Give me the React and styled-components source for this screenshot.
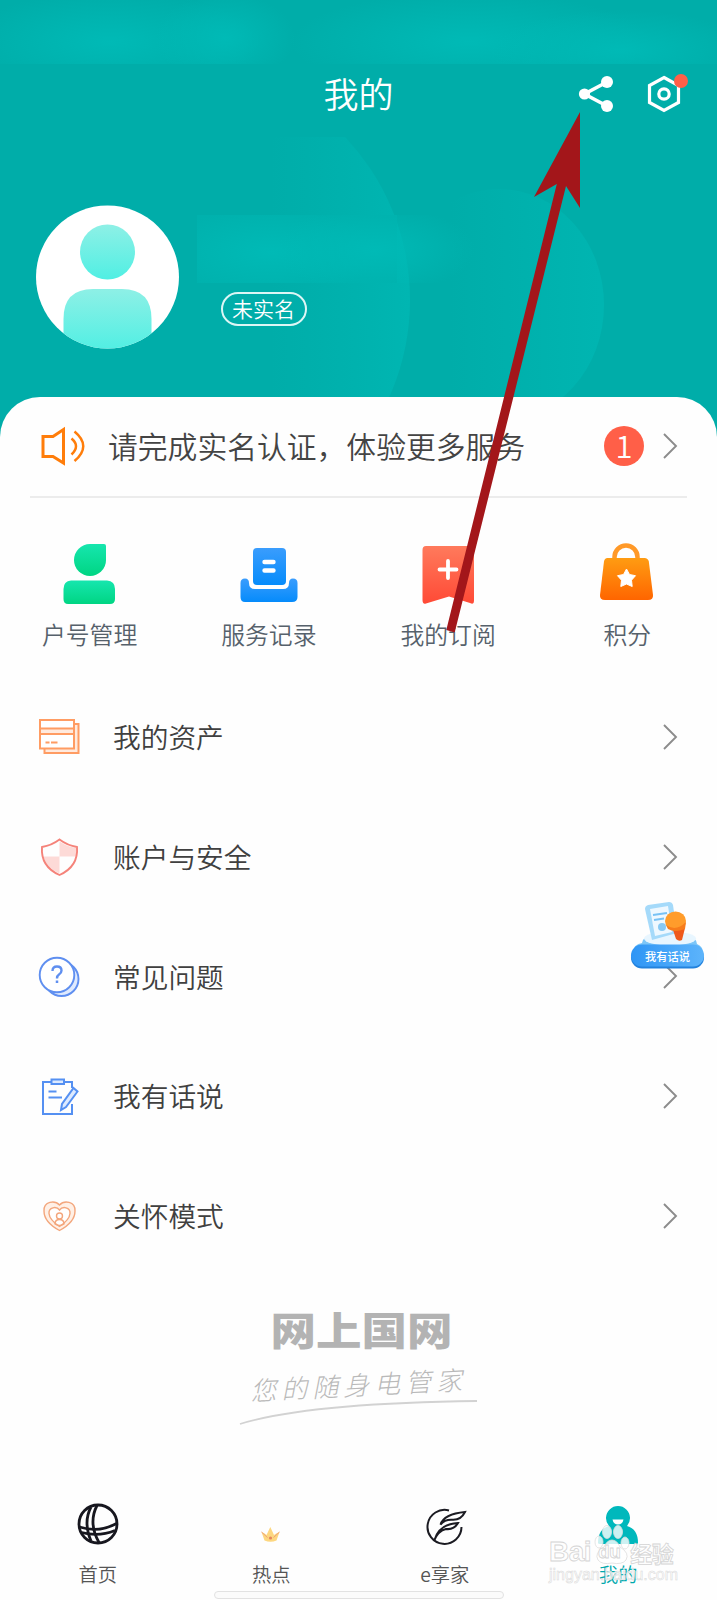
import React from 'react'
import styled, { createGlobalStyle } from 'styled-components'

const GlobalStyle = createGlobalStyle`
* {
  box-sizing: border-box;
}
body {
  margin: 0;
  background: #ffffff;
  font-family: "Noto Sans CJK SC", "Noto Sans", sans-serif;
  font-weight: 350;
}
svg {
  display: block;
  flex-shrink: 0;
  overflow: visible;
}
`;

const Page = styled.div`
position: relative;
display: flex;
flex-direction: column;
width: 717px;
height: 1600px;
overflow: hidden;
background: #fefefe;
`;

const Header = styled.header`
position: relative;
height: 437px;
flex-shrink: 0;
background: #00ada9;
color: #ffffff;
`;

const HeaderArt = styled.svg`
position: absolute;
top: 0;
left: 0;
`;

const TitleBar = styled.div`
display: grid;
grid-template-columns: 1fr auto 1fr;
align-items: center;
height: 62px;
margin-top: 64px;
`;

const HeaderInner = styled.div`
position: relative;
display: flow-root;
`;

const Title = styled.h1`
grid-column: 2;
margin: -4px 0 0;
font-size: 35px;
font-weight: 350;
line-height: 58px;
`;

const HeaderActions = styled.div`
display: flex;
justify-content: flex-end;
align-items: center;
gap: 34px;
padding-right: 36px;
margin-top: -3px;
`;

const SettingButton = styled.div`
position: relative;
`;

const Dot = styled.span`
position: absolute;
top: -1px;
right: -6.5px;
width: 14px;
height: 14px;
border-radius: 50%;
background: #ff5f48;
`;

const Profile = styled.div`
display: flex;
align-items: flex-start;
padding: 79px 0 0 35.5px;
`;

const RealNameTag = styled.span`
width: 86px;
height: 34px;
margin: 87px 0 0 42px;
border: 2px solid #dcf6f5;
border-radius: 17px;
font-size: 21px;
line-height: 28px;
text-align: center;
white-space: nowrap;
`;

const Panel = styled.main`
position: relative;
display: flex;
flex-direction: column;
flex: 1;
margin-top: -40px;
border-radius: 40px 40px 0 0;
background: #fefefe;
`;

const Notice = styled.div`
display: flex;
align-items: center;
height: 101px;
margin: 0 30px;
padding: 0 10px 2px;
border-bottom: 2px solid #ececec;
`;

const NoticeText = styled.span`
flex: 1;
margin-left: 22px;
padding-bottom: 2px;
color: #444444;
font-size: 29.8px;
line-height: 40px;
white-space: nowrap;
`;

const Count = styled.span`
width: 40px;
height: 40px;
margin-right: 19px;
border-radius: 50%;
background: #ff5f48;
color: #ffffff;
font-size: 31px;
line-height: 38px;
text-align: center;
`;

const QuickRow = styled.div`
display: grid;
grid-template-columns: repeat(4, 1fr);
height: 179px;
padding-top: 42px;
`;

const QuickItem = styled.div`
display: flex;
flex-direction: column;
align-items: center;
`;

const QuickLabel = styled.span`
margin-top: 12px;
color: #56616b;
font-size: 23.8px;
line-height: 36px;
`;

const MenuList = styled.div`
display: flex;
flex-direction: column;
`;

const MenuItem = styled.div`
display: flex;
align-items: center;
height: 119.7px;
padding: 0 40px 0 38px;
`;

const MenuLabel = styled.span`
flex: 1;
margin-left: 32px;
padding-bottom: 1px;
color: #404040;
font-size: 27.7px;
line-height: 40px;
`;

const Brand = styled.div`
display: flex;
flex-direction: column;
align-items: center;
padding-top: 29px;
`;

const BrandName = styled.span`
margin-left: 6px;
color: #b3b3b3;
font-size: 45.5px;
font-weight: 900;
line-height: 48px;
transform: scaleY(0.84);
`;

const Slogan = styled.span`
margin-top: 15px;
color: #b9b9b9;
font-size: 26px;
font-style: italic;
font-weight: 300;
letter-spacing: 5px;
line-height: 34px;
transform: rotate(-3deg);
`;

const TabBar = styled.nav`
display: grid;
grid-template-columns: repeat(4, 173.5px);
height: 88px;
padding-left: 11px;
margin-top: auto;
`;

const Tab = styled.div`
display: flex;
flex-direction: column;
align-items: center;
color: ${({ $active }) => ($active ? '#00a9ad' : '#555555')};
font-size: 19.3px;
line-height: 28px;
`;

const TabIcon = styled.div`
height: 42px;
margin-bottom: 15px;
`;

const HomeIndicator = styled.div`
width: 290px;
height: 8px;
margin: 0 auto 1px;
border: 1.5px solid #e2e2e2;
border-radius: 4px;
background: #fbfbfb;
`;

const Feedback = styled.div`
position: absolute;
top: 902px;
left: 630px;
width: 75px;
`;

const FeedbackText = styled.span`
position: absolute;
top: 44.5px;
left: 0;
width: 75px;
color: #ffffff;
font-size: 11.3px;
font-weight: 500;
line-height: 18px;
text-align: center;
`;

const Arrow = styled.svg`
position: absolute;
top: 112px;
left: 440px;
`;

const Watermark = styled.div`
position: absolute;
top: 1534px;
left: 549px;
width: 132px;
font-family: "Liberation Sans", "Noto Sans CJK SC", sans-serif;
font-weight: 700;
color: rgba(255, 255, 255, 0.85);
-webkit-text-stroke: 0.8px #d4d4d4;
`;

const WatermarkLogo = styled.div`
display: flex;
align-items: center;
height: 36px;
font-size: 28px;
letter-spacing: -0.5px;
`;

const WatermarkPaw = styled.svg`
position: absolute;
top: -11px;
left: 45px;
`;

const WatermarkDu = styled.span`
position: relative;
margin-left: 7px;
font-size: 19px;
`;

const WatermarkCn = styled.span`
margin-left: 10px;
font-size: 22px;
`;

const WatermarkUrl = styled.div`
margin-top: -4px;
font-size: 16px;
font-weight: 400;
line-height: 18px;
-webkit-text-stroke: 0.5px #d8d8d8;
`;

const Chevron = () => (
  <svg width="14" height="26" viewBox="0 0 14 26" fill="none" stroke="#8c8c8c" strokeWidth="1.9">
    <path d="M1 1 13 13 1 25" />
  </svg>
)

const ShareIcon = () => (
  <svg width="35" height="38" viewBox="0 0 35 38" fill="#ffffff">
    <path d="M29 7 6.500 19 29 31" fill="none" stroke="#ffffff" strokeWidth="3.6" />
    <circle cx="29" cy="7" r="6" />
    <circle cx="6.500" cy="19" r="5.600" />
    <circle cx="29" cy="31" r="6" />
  </svg>
)

const SettingIcon = () => (
  <svg width="34" height="38" viewBox="0 0 34 38" fill="none" stroke="#ffffff" strokeWidth="3.2">
    <path d="M17 2.500 31.500 10.500V27.500L17 35.500 2.500 27.500V10.500Z" />
    <circle cx="17" cy="19" r="5.200" />
  </svg>
)

const Avatar = () => (
  <svg width="143" height="144" viewBox="0 0 143 144">
    <defs>
      <linearGradient id="avatarFill" x1="0" y1="0" x2="0" y2="1">
        <stop offset="0" stopColor="#8ef0e6" />
        <stop offset="1" stopColor="#50efe3" />
      </linearGradient>
      <clipPath id="avatarClip"><circle cx="71.500" cy="72" r="71.500" /></clipPath>
    </defs>
    <circle cx="71.500" cy="72" r="71.500" fill="#ffffff" />
    <g clipPath="url(#avatarClip)" fill="url(#avatarFill)">
      <circle cx="71.500" cy="47" r="27.500" />
      <path d="M27.500 146V114Q27.500 84 57 84H86Q115.500 84 115.500 114V146Z" />
    </g>
  </svg>
)

const SpeakerIcon = () => (
  <svg width="46" height="38" viewBox="0 0 46 38" fill="none" stroke="#ff7d0a" strokeWidth="3">
    <path d="M3 9.500H13L23.500 2.500V36L13 29.500H3Z" />
    <path d="M31.500 11.500Q40.500 19 31.500 27.500" strokeWidth="2.500" />
    <path d="M34.500 4.500Q52 19 34.500 34" strokeWidth="2.500" />
  </svg>
)

const AccountIcon = () => (
  <svg width="60" height="64" viewBox="1 0 60 64">
    <defs>
      <linearGradient id="greenFill" x1="0" y1="0" x2="0" y2="1">
        <stop offset="0" stopColor="#16e6ae" />
        <stop offset="1" stopColor="#00d583" />
      </linearGradient>
    </defs>
    <path d="M31 4H45Q47 4 47 6V20A16 16 0 1 1 31 4Z" fill="url(#greenFill)" />
    <path d="M12 40.500H48Q56 41 56 49V59Q56 64 51 64H9Q4.500 64 4.500 59V49Q4.500 41 12 40.500Z" fill="url(#greenFill)" />
  </svg>
)

const RecordIcon = () => (
  <svg width="60" height="64" viewBox="0 0 60 64">
    <defs>
      <linearGradient id="blueFill" x1="0" y1="0" x2="0" y2="1">
        <stop offset="0" stopColor="#3a9dfd" />
        <stop offset="1" stopColor="#058bfb" />
      </linearGradient>
    </defs>
    <rect x="14" y="8" width="33" height="37" rx="4" fill="url(#blueFill)" />
    <path d="M6 38.500Q10 38.500 10 43 10 49 16 49H44Q50 49 50 43 50 38.500 54 38.500 58.500 38.500 58.500 43V57Q58.500 62 53 62H6Q1.500 62 1.500 57V43Q1.500 38.500 6 38.500Z" fill="url(#blueFill)" />
    <path d="M25.500 22H34.500M25.500 30.500H34.500" stroke="#ffffff" strokeWidth="4.400" strokeLinecap="round" />
  </svg>
)

const SubscribeIcon = () => (
  <svg width="60" height="64" viewBox="0 0 60 64">
    <defs>
      <linearGradient id="redFill" x1="0" y1="0" x2="0" y2="1">
        <stop offset="0" stopColor="#ff7a5c" />
        <stop offset="1" stopColor="#ff4a36" />
      </linearGradient>
    </defs>
    <path d="M8 6H52Q56 6 56 10V61Q56 65 52 63L31 56.500 8 63.500Q4.500 64.500 4.500 60V10Q4.500 6 8 6Z" fill="url(#redFill)" />
    <path d="M30 21V38M21.500 29.500H38.500" stroke="#ffffff" strokeWidth="3.800" strokeLinecap="round" />
  </svg>
)

const PointsIcon = () => (
  <svg width="60" height="64" viewBox="0.500 -1 60 64">
    <defs>
      <linearGradient id="orangeFill" x1="0" y1="0" x2="0" y2="1">
        <stop offset="0" stopColor="#ff9c12" />
        <stop offset="1" stopColor="#ff6500" />
      </linearGradient>
    </defs>
    <path d="M18 19V16A11.500 11.500 0 0 1 41 16V19" fill="none" stroke="#ff9928" strokeWidth="4.500" />
    <path d="M11 17H48Q51.500 17 52.300 20.500L56.500 54Q57 59 51.500 59H8.500Q3 59 3.500 54L7.500 20.500Q8 17 11 17Z" fill="url(#orangeFill)" />
    <path d="M30 28 33 33.500 39 34.700 35 39.200 35.700 45.500 30 43 24.300 45.500 25 39.200 21 34.700 27 33.500Z" fill="#ffffff" stroke="#ffffff" strokeWidth="1" strokeLinejoin="round" />
  </svg>
)

const AssetIcon = () => (
  <svg width="43" height="44" viewBox="0.500 0 43 44" fill="none" stroke="#ff9c63" strokeWidth="2">
    <path d="M37 9H41V38H7V34" fill="#ffeade" />
    <rect x="2.500" y="5" width="34" height="28.500" fill="#ffffff" />
    <path d="M2.500 13.500H36.500V19H2.500Z" fill="#ffeade" />
    <path d="M8 27.500H12M13.500 27.500H20" />
  </svg>
)

const ShieldIcon = () => (
  <svg width="43" height="44" viewBox="0 -0.500 43 44">
    <path d="M21.500 6Q29 11 38 12.500V21H21.500ZM21.500 21V38Q8 32 5.500 21Z" fill="#fddad7" />
    <path d="M21.500 4Q29.500 10 39 11.500 40.500 31 21.500 39.500 2.500 31 4 11.500 13.500 10 21.500 4Z" fill="none" stroke="#f5837a" strokeWidth="1.900" />
  </svg>
)

const QuestionIcon = () => (
  <svg width="43" height="44" viewBox="0.500 -1.500 43 44" fill="none" stroke="#5f8ff0" strokeWidth="1.900">
    <circle cx="24" cy="23.500" r="17" fill="#dfeafe" />
    <circle cx="19.500" cy="19.500" r="17.300" fill="#ffffff" />
    <path d="M15 15.500Q15 11 19.500 11 24 11 24 15 24 17.500 21.500 19 19.500 20.200 19.500 23" strokeWidth="2.400" />
    <path d="M19.500 25V27.500" strokeWidth="2.500" />
  </svg>
)

const NoteIcon = () => (
  <svg width="43" height="44" viewBox="0 -2 43 44" fill="none" stroke="#5590f2" strokeWidth="2">
    <path d="M13 6H5V38H34V28M34 12V6H26" />
    <rect x="13.500" y="3.500" width="12.500" height="4.500" fill="#ddeaff" />
    <path d="M10.500 15.500H18.500M10.500 21.500H24" />
    <path d="M35.500 12 39.500 15.500 28 31 23 34 24 28Z" fill="#ddeaff" />
  </svg>
)

const CareIcon = () => (
  <svg width="43" height="44" viewBox="0 -3 43 44" fill="none" stroke="#f3a67c" strokeWidth="1.400">
    <path d="M21.500 8C17 3 5.500 4 6 14 6 23 15 30 21.500 33.500 28 30 37 23 37 14 37.500 4 26 3 21.500 8Z" fill="#fff0e6" />
    <path d="M21.500 13C18.500 9 10.500 10 11 16.500 11.500 22.500 17 26.500 21.500 29.500 26 26.500 31.500 22.500 32 16.500 32.500 10 24.500 9 21.500 13Z" fill="#ffffff" />
    <circle cx="21.500" cy="19" r="3" />
    <path d="M17 27Q17 22.500 21.500 22.500 26 22.500 26 27 21.500 30 17 27Z" />
  </svg>
)

const HomeIcon = () => (
  <svg width="42" height="42" viewBox="0 0 42 42" fill="none" stroke="#17171f" strokeWidth="2.800">
    <circle cx="21" cy="21" r="19" />
    <path d="M14 4Q6 19 14 38M20 2.500Q11 20 22 39.500" />
    <path d="M2.500 24Q22 30 39.500 20.500M4.500 29.500Q22 34 38 27.500" />
  </svg>
)

const HotIcon = () => (
  <svg width="42" height="42" viewBox="0.500 1 42 42">
    <path d="M12 30Q15 31 17 33L20.800 25 24.500 33Q27 31 30 30L27 38.500Q21 41 15 38.500Z" fill="#fdd780" />
    <path d="M12 30 18 35.500M30 30 24 35.500" stroke="#eda17a" strokeWidth="1" />
    <circle cx="21" cy="36" r="1.600" fill="#e5865e" />
  </svg>
)

const LeafIcon = () => (
  <svg width="42" height="42" viewBox="1 0 42 42" fill="none" stroke="#1b1b22" strokeWidth="2">
    <path d="M26 7.500A17 17 0 1 0 38.500 24" />
    <path d="M17.500 21.500Q21 11 42 9 38 17 30 16.800 22 16 17.500 21.500Z" />
    <path d="M11.500 37Q16 21 35 20 31 27 23 26 15 28 11.500 37Z" />
  </svg>
)

const MineIcon = () => (
  <svg width="42" height="42" viewBox="0 0 42 42" fill="#00b8bc">
    <path d="M12 23A12 12 0 1 1 30 23Q41 26 41 40Q41 41 39 41H3Q1 41 1 40 1 26 12 23Z" />
    <path d="M15.500 16.500H26.500Q25.500 21.500 21 21.500 16.500 21.500 15.500 16.500Z" fill="#ffffff" />
  </svg>
)

const FeedbackArt = () => (
  <svg width="75" height="68" viewBox="0 0 75 68">
    <defs>
      <linearGradient id="pillFill" x1="0" y1="0" x2="1" y2="0">
        <stop offset="0" stopColor="#2e95f5" />
        <stop offset="1" stopColor="#5db4fb" />
      </linearGradient>
    </defs>
    <path d="M3 50Q4 42 12 41 14 33 24 33 42 27 58 33 66 35 67 42 73 44 73 52Z" fill="#7cc6f8" />
    <ellipse cx="40" cy="36.500" rx="26" ry="7" fill="#e8f6ff" />
    <path d="M18 3 39 0Q42 0 43 3L47 31 22 38 15 7Q15 4 18 3Z" fill="#a5dafa" />
    <path d="M20 7 38 4 42 30 25 34Z" fill="#eef8ff" />
    <path d="M23 13 37 11M24 18 34 16.500" stroke="#78c2f5" strokeWidth="1.800" />
    <circle cx="32" cy="25" r="4" fill="#88c9f4" />
    <path d="M43 28 55 26 52 38Q49 40 46 37Z" fill="#ee5a1c" />
    <ellipse cx="45.500" cy="19" rx="10.500" ry="9.500" fill="#ff9c2b" />
    <path d="M36 23Q46 30 56 20L55 27Q45 31 38 27Z" fill="#f77c1b" />
    <rect x="1" y="44.500" width="73" height="22" rx="11" fill="#2282dd" />
    <rect x="1" y="42.500" width="73" height="22" rx="11" fill="url(#pillFill)" />
  </svg>
)

const quickData = [
  { label: '户号管理', icon: <AccountIcon /> },
  { label: '服务记录', icon: <RecordIcon /> },
  { label: '我的订阅', icon: <SubscribeIcon /> },
  { label: '积分', icon: <PointsIcon /> },
]

const menuData = [
  { label: '我的资产', icon: <AssetIcon /> },
  { label: '账户与安全', icon: <ShieldIcon /> },
  { label: '常见问题', icon: <QuestionIcon /> },
  { label: '我有话说', icon: <NoteIcon /> },
  { label: '关怀模式', icon: <CareIcon /> },
]

const tabData = [
  { label: '首页', icon: <HomeIcon /> },
  { label: '热点', icon: <HotIcon /> },
  { label: 'e享家', icon: <LeafIcon /> },
  { label: '我的', icon: <MineIcon />, active: true },
]

const App = () => {
  return (
    <>
      <GlobalStyle />
      <Page>
        <Header>
          <HeaderArt width="717" height="437" viewBox="0 0 717 437">
            <defs>
              <linearGradient id="discLeft" gradientUnits="userSpaceOnUse" x1="270" y1="0" x2="410" y2="0">
                <stop offset="0" stopColor="#00b4b0" stopOpacity="0" />
                <stop offset="1" stopColor="#00b6b2" />
              </linearGradient>
              <linearGradient id="discRight" gradientUnits="userSpaceOnUse" x1="450" y1="0" x2="600" y2="0">
                <stop offset="0" stopColor="#00b5b1" stopOpacity="0" />
                <stop offset="1" stopColor="#00b5b1" />
              </linearGradient>
              <radialGradient id="glow">
                <stop offset="0" stopColor="#00bab6" />
                <stop offset="1" stopColor="#00bab6" stopOpacity="0" />
              </radialGradient>
              <clipPath id="statusClip"><rect width="717" height="64" /></clipPath>
              <clipPath id="nameClip"><rect x="197" y="215" width="290" height="68" /></clipPath>
              <clipPath id="discClip"><rect x="240" y="137" width="200" height="300" /></clipPath>
            </defs>
            <circle cx="173" cy="300" r="237" fill="url(#discLeft)" clipPath="url(#discClip)" />
            <ellipse cx="499" cy="305" rx="105" ry="116" fill="url(#discRight)" />
            <g clipPath="url(#statusClip)" fill="url(#glow)">
              <ellipse cx="110" cy="42" rx="150" ry="50" />
              <ellipse cx="225" cy="38" rx="70" ry="45" />
              <ellipse cx="470" cy="42" rx="180" ry="50" />
              <ellipse cx="620" cy="50" rx="130" ry="40" />
            </g>
            <g clipPath="url(#nameClip)">
              <rect x="197" y="215" width="200" height="68" fill="#00b1ad" />
              <ellipse cx="270" cy="252" rx="110" ry="44" fill="url(#glow)" />
              <ellipse cx="375" cy="250" rx="100" ry="44" fill="url(#glow)" />
            </g>
          </HeaderArt>
          <HeaderInner>
            <TitleBar>
              <Title>我的</Title>
              <HeaderActions>
                <ShareIcon />
                <SettingButton>
                  <SettingIcon />
                  <Dot />
                </SettingButton>
              </HeaderActions>
            </TitleBar>
            <Profile>
              <Avatar />
              <RealNameTag>未实名</RealNameTag>
            </Profile>
          </HeaderInner>
        </Header>
        <Panel>
          <Notice>
            <SpeakerIcon />
            <NoticeText>请完成实名认证，体验更多服务</NoticeText>
            <Count>1</Count>
            <Chevron />
          </Notice>
          <QuickRow>
            {quickData.map((item, index) => {
              return (
                <QuickItem key={index}>
                  {item.icon}
                  <QuickLabel>{item.label}</QuickLabel>
                </QuickItem>
              )
            })}
          </QuickRow>
          <MenuList>
            {menuData.map((item, index) => {
              return (
                <MenuItem key={index}>
                  {item.icon}
                  <MenuLabel>{item.label}</MenuLabel>
                  <Chevron />
                </MenuItem>
              )
            })}
          </MenuList>
          <Brand>
            <BrandName>网上国网</BrandName>
            <Slogan>您的随身电管家</Slogan>
            <svg width="240" height="26" viewBox="0 1 240 26" fill="none" stroke="#d2d2d2" strokeWidth="1.800">
              <path d="M1 24Q70 3 238 1" />
            </svg>
          </Brand>
          <TabBar>
            {tabData.map((item, index) => {
              return (
                <Tab $active={item.active} key={index}>
                  <TabIcon>{item.icon}</TabIcon>
                  {item.label}
                </Tab>
              )
            })}
          </TabBar>
          <HomeIndicator />
        </Panel>
        <Feedback>
          <FeedbackArt />
          <FeedbackText>我有话说</FeedbackText>
        </Feedback>
        <Watermark>
          <WatermarkPaw width="36" height="42" viewBox="0 0 36 42" fill="#ffffff" fillOpacity="0.8" stroke="#dddddd" strokeWidth="0.800">
            <ellipse cx="5" cy="19" rx="4" ry="6" />
            <ellipse cx="13" cy="9" rx="4.500" ry="6.500" />
            <ellipse cx="24" cy="9" rx="4.500" ry="6.500" />
            <ellipse cx="31" cy="20" rx="4" ry="6" />
            <path d="M18 17Q23 17 26 24 36 30 32 37 28 42 18 40 8 42 4 37 0 30 10 24 13 17 18 17Z" />
          </WatermarkPaw>
          <WatermarkLogo>
            Bai
            <WatermarkDu>du</WatermarkDu>
            <WatermarkCn>经验</WatermarkCn>
          </WatermarkLogo>
          <WatermarkUrl>jingyan.baidu.com</WatermarkUrl>
        </Watermark>
        <Arrow width="141" height="522" viewBox="0 0 141 522" fill="#a3161a">
          <path d="M140 0V96L126 74 14.700 520.500 6.300 518 116.800 72 94 85Z" />
        </Arrow>
      </Page>
    </>
  )
}

export default App
